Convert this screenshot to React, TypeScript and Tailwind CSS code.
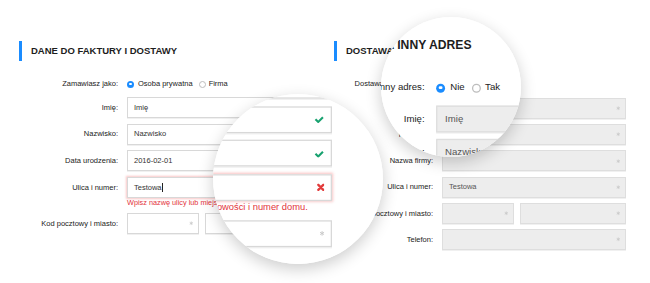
import React from "react"

type Mark = "check" | "error" | "star" | null

function CheckIcon() {
  return (
    <svg viewBox="0 0 16 13" className="w-[8px] h-[6.5px] shrink-0">
      <path d="M1 7.2l2.3-2.3 3.2 3.2L12.7 1.9 15 4.2l-8.5 8.4z" fill="#19a270" />
    </svg>
  )
}

function ErrorIcon() {
  return (
    <svg viewBox="0 0 10 10" className="w-[6.5px] h-[6.5px] shrink-0">
      <path d="M2 2l6 6M8 2l-6 6" stroke="#e23b3b" strokeWidth="2.8" strokeLinecap="round" />
    </svg>
  )
}

function StarIcon() {
  return (
    <svg viewBox="0 0 10 10" className="w-[4.5px] h-[4.5px] shrink-0">
      <path d="M5 1v8M1.5 3l7 4M8.5 3l-7 4" stroke="#c7c7c7" strokeWidth="1.6" />
    </svg>
  )
}

interface FieldProps {
  value?: string
  mark?: Mark
  gray?: boolean
  focus?: boolean
  cursor?: boolean
  width?: string
}

function Field({ value, mark = null, gray, focus, cursor, width = "w-[184px]" }: FieldProps) {
  const tone = gray
    ? "bg-[#ededed] border-[#dedede] text-[#555]"
    : "bg-white border-[#d8d8d8] text-[#333]"
  const ring = focus
    ? "border-[#6eaae6] shadow-[0_0_2px_1px_rgba(238,90,90,0.35)]"
    : "shadow-[0_1px_0_rgba(0,0,0,0.06)]"
  return (
    <div className={`${width} h-[21px] shrink-0 flex items-center border pl-[6px] pr-[5px] ${tone} ${ring}`}>
      <div className="flex-1 flex items-center text-[7.5px] leading-none">
        {value}
        {cursor && <span className="ml-[0.5px] w-[0.7px] h-[9px] bg-[#222]" />}
      </div>
      {mark === "check" && <CheckIcon />}
      {mark === "error" && <ErrorIcon />}
      {mark === "star" && <StarIcon />}
    </div>
  )
}

function Row({ label, children }: { label: string; children: React.ReactNode }) {
  return (
    <div className="flex items-center gap-[9px]">
      <div className="w-[99px] shrink-0 text-right text-[7.5px] leading-none text-[#222]">{label}</div>
      {children}
    </div>
  )
}

function Radio({ on }: { on?: boolean }) {
  return on ? (
    <span className="w-[7px] h-[7px] rounded-full bg-[#1a8cff] flex items-center justify-center shrink-0">
      <span className="block w-[2.5px] h-[2.5px] rounded-full bg-white" />
    </span>
  ) : (
    <span className="block w-[7px] h-[7px] rounded-full border border-[#bdbdbd] bg-white shrink-0" />
  )
}

function Heading({ text }: { text: string }) {
  return (
    <div className="flex items-center h-[20px]">
      <div className="w-[3px] h-[20px] bg-[#1a8cff]" />
      <div className="ml-[9px] text-[9.5px] font-bold text-[#1d1d1d] whitespace-nowrap">{text}</div>
    </div>
  )
}

function RadioRow({ label, a, b }: { label: string; a: string; b: string }) {
  return (
    <div className="mt-[17px] h-[12px] flex items-center gap-[9px]">
      <div className="w-[99px] shrink-0 text-right text-[7.5px] leading-none text-[#222] whitespace-nowrap">{label}</div>
      <div className="flex items-center text-[7.5px] leading-none text-[#222]">
        <Radio on />
        <span className="ml-[4px]">{a}</span>
        <span className="ml-[6px]">
          <Radio />
        </span>
        <span className="ml-[3px]">{b}</span>
      </div>
    </div>
  )
}

function Page() {
  return (
    <div className="flex pl-[19px] pt-[41px] w-[650px] h-[283px] bg-white">
      <section className="w-[315px] shrink-0 flex flex-col">
        <Heading text="DANE DO FAKTURY I DOSTAWY" />
        <RadioRow label="Zamawiasz jako:" a="Osoba prywatna" b="Firma" />
        <div className="mt-[7px] flex flex-col gap-[5.7px]">
          <Row label="Imię:">
            <Field value="Imię" mark="check" />
          </Row>
          <Row label="Nazwisko:">
            <Field value="Nazwisko" mark="check" />
          </Row>
          <Row label="Data urodzenia:">
            <Field value="2016-02-01" mark="check" />
          </Row>
          <div className="flex flex-col">
            <Row label="Ulica i numer:">
              <Field value="Testowa" mark="error" focus cursor />
            </Row>
            <div className="mt-[1px] h-[8px] pl-[108px] text-[7.3px] leading-[8px] text-[#e3333b] whitespace-nowrap">
              Wpisz nazwę ulicy lub miejscowości i numer domu.
            </div>
          </div>
          <Row label="Kod pocztowy i miasto:">
            <div className="flex gap-[6px]">
              <Field width="w-[72px]" mark="star" />
              <Field width="w-[106px]" mark="star" />
            </div>
          </Row>
        </div>
      </section>

      <section className="w-[315px] shrink-0 flex flex-col">
        <Heading text="DOSTAWA NA INNY ADRES" />
        <RadioRow label="Dostawa na inny adres:" a="Nie" b="Tak" />
        <div className="mt-[8px] flex flex-col gap-[5.2px]">
          <Row label="Imię:">
            <Field value="Imię" mark="star" gray />
          </Row>
          <Row label="Nazwisko:">
            <Field value="Nazwisko" mark="star" gray />
          </Row>
          <Row label="Nazwa firmy:">
            <Field mark="star" gray />
          </Row>
          <Row label="Ulica i numer:">
            <Field value="Testowa" mark="star" gray />
          </Row>
          <Row label="Kod pocztowy i miasto:">
            <div className="flex gap-[6px]">
              <Field width="w-[72px]" mark="star" gray />
              <Field width="w-[106px]" mark="star" gray />
            </div>
          </Row>
          <Row label="Telefon:">
            <Field mark="star" gray />
          </Row>
        </div>
      </section>
    </div>
  )
}

export default function App() {
  return (
    <div className="relative w-[650px] h-[283px] overflow-hidden bg-white font-['Liberation_Sans',Arial,sans-serif]">
      <Page />

      {/* lens over the billing form */}
      <div className="absolute left-[213px] top-[94px] w-[170px] h-[170px] rounded-full overflow-hidden bg-white shadow-[0_5px_16px_rgba(0,0,0,0.2)]">
        <div className="absolute left-[-213px] top-[-94px] w-[650px] h-[283px] scale-[1.28] origin-[236px_187px]">
          <Page />
        </div>
      </div>

      {/* lens over the delivery header */}
      <div className="absolute left-[381px] top-[17px] w-[140px] h-[140px] rounded-full overflow-hidden bg-white shadow-[0_5px_16px_rgba(0,0,0,0.2)]">
        <div className="absolute left-[-381px] top-[-17px] w-[650px] h-[283px] scale-[1.28] origin-[463px_71px]">
          <Page />
        </div>
      </div>
    </div>
  )
}
